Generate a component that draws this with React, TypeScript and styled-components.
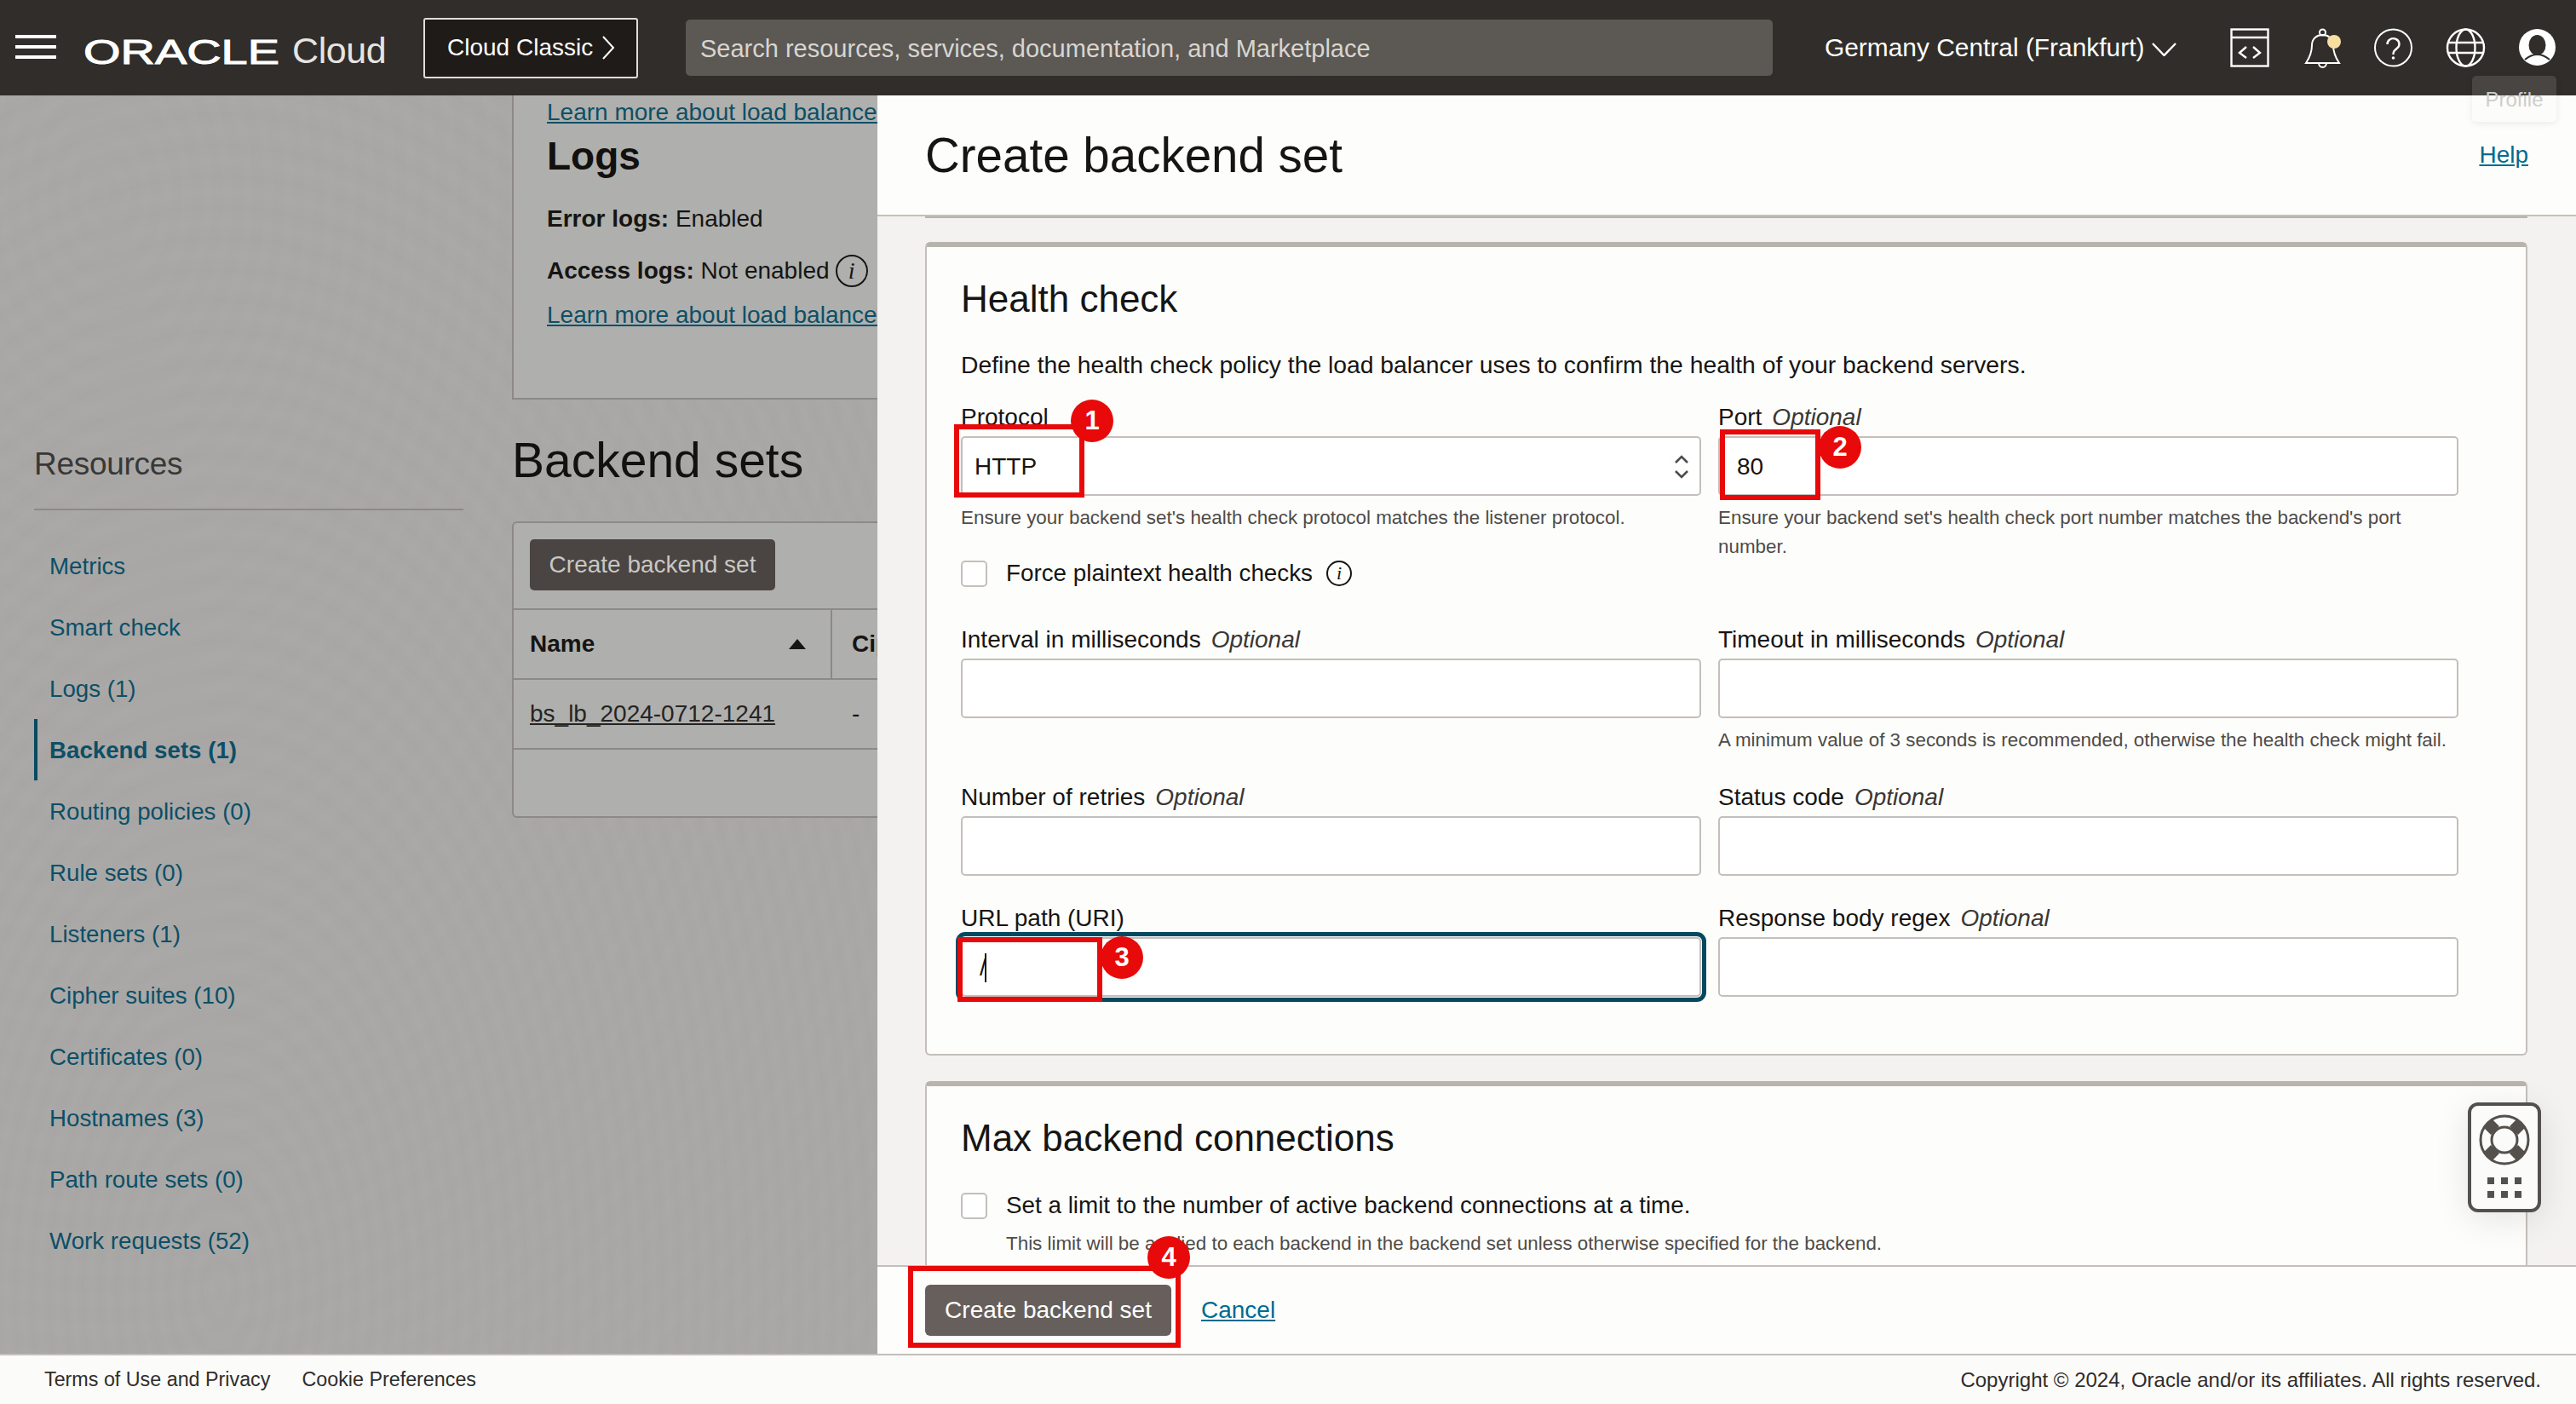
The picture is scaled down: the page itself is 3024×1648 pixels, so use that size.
import React from "react";
import styled, { createGlobalStyle } from "styled-components";

const GlobalStyle = createGlobalStyle`
	html, body {
		margin: 0;
		padding: 0;
		background: #fbfbfa;
	}
	body {
		font-family: "Liberation Sans", Arial, sans-serif;
		color: #161513;
	}
	* {
		box-sizing: border-box;
	}
`;

const Page = styled.div`
	width: 3024px;
	height: 1648px;
	display: flex;
	flex-direction: column;
	overflow: hidden;
	position: relative;
`;

/* ---------- top bar ---------- */

const Header = styled.header`
	height: 112px;
	flex-shrink: 0;
	background: #312d2a;
	display: flex;
	align-items: center;
	padding-left: 18px;
	position: relative;
	z-index: 3;
`;

const Hamburger = styled.div`
	width: 48px;
	height: 28px;
	margin-top: -2px;
	display: flex;
	flex-direction: column;
	justify-content: space-between;
	span {
		display: block;
		height: 4px;
		background: #fff;
	}
`;

const LogoMark = styled.svg`
	width: 232px;
	height: 40px;
	margin-left: 32px;
	margin-top: 10px;
	overflow: visible;
	text {
		font-family: "Liberation Sans", Arial, sans-serif;
		font-weight: 400;
		font-size: 41px;
		fill: #fff;
		stroke: #fff;
		stroke-width: 1;
	}
`;

const CloudWord = styled.span`
	margin-left: 13px;
	width: 111px;
	font-size: 43px;
	line-height: 48px;
	margin-top: 6px;
	color: #e6e4e1;
	letter-spacing: -0.4px;
`;

const ClassicButton = styled.div`
	margin-left: 43px;
	width: 252px;
	height: 71px;
	background: #1e1b18;
	border: 2px solid #e0dcd8;
	border-radius: 3px;
	color: #fff;
	font-size: 28px;
	display: flex;
	align-items: center;
	padding-left: 26px;
	gap: 10px;
	svg {
		width: 16px;
		height: 28px;
	}
`;

const SearchBox = styled.div`
	margin-left: 56px;
	width: 1276px;
	height: 66px;
	background: #5c5955;
	border-radius: 5px;
	color: #d8d5d1;
	font-size: 29px;
	display: flex;
	align-items: center;
	padding-left: 17px;
	padding-top: 2px;
`;

const RegionPicker = styled.div`
	margin-left: 61px;
	display: flex;
	align-items: center;
	gap: 9px;
	color: #fff;
	font-size: 29.9px;
	width: 415px;
	svg {
		width: 29px;
		height: 16px;
		margin-top: 4px;
	}
`;

const HeaderIcons = styled.div`
	margin-left: 61px;
	display: flex;
	gap: 38.5px;
`;

const IconSlot = styled.div`
	width: 46px;
	height: 46px;
	position: relative;
	svg {
		display: block;
		width: 46px;
		height: 46px;
		overflow: visible;
	}
`;

const ProfileTip = styled.div`
	position: absolute;
	top: 56px;
	left: -54px;
	width: 99px;
	height: 54px;
	border-radius: 5px;
	background: rgba(250, 250, 248, 0.12);
	box-shadow: 0 2px 8px rgba(0, 0, 0, 0.08);
	color: #cfcdca;
	font-size: 24px;
	display: flex;
	align-items: flex-end;
	justify-content: center;
	padding-bottom: 12px;
`;

/* ---------- page behind the drawer ---------- */

const Main = styled.main`
	flex: 1;
	min-height: 0;
	display: flex;
`;

const DimmedPage = styled.div`
	width: 1030px;
	flex-shrink: 0;
	display: flex;
	overflow: hidden;
	background-color: #a9a8a7;
	background-image:
		repeating-radial-gradient(ellipse at 25% 95%, rgba(0, 0, 0, 0.012) 0, rgba(0, 0, 0, 0) 10px, rgba(0, 0, 0, 0.012) 20px),
		repeating-radial-gradient(ellipse at 12% 8%, rgba(255, 255, 255, 0.01) 0, rgba(255, 255, 255, 0) 12px, rgba(255, 255, 255, 0.01) 24px);
`;

const Sidebar = styled.aside`
	width: 601px;
	flex-shrink: 0;
	padding: 408px 57px 0 40px;
`;

const ResourcesTitle = styled.h2`
	margin: 0;
	height: 79px;
	padding-bottom: 27px;
	border-bottom: 2px solid #8c8987;
	font-size: 37px;
	line-height: 50px;
	font-weight: 400;
	color: #3a3836;
	letter-spacing: -0.3px;
`;

const NavList = styled.nav`
	margin-top: 29px;
`;

const NavItem = styled.div<{ $active?: boolean }>`
	height: 72px;
	display: flex;
	align-items: center;
	padding: 2px 0 0 14px;
	border-left: 4px solid ${(p) => (p.$active ? "#0a4a60" : "transparent")};
	font-size: 27.7px;
	font-weight: ${(p) => (p.$active ? 700 : 400)};
	color: #0c4f66;
`;

const ContentColumn = styled.div`
	flex: 1;
	min-width: 0;
	overflow: hidden;
	white-space: nowrap;
`;

const DetailsBox = styled.section`
	height: 357px;
	padding: 3px 0 0 39px;
	background: #afafad;
	border-left: 2px solid #8c8987;
	border-bottom: 2px solid #8c8987;
`;

const DimLink = styled.a`
	display: block;
	line-height: 34px;
	font-size: 28px;
	color: #0c4f66;
	text-decoration: underline;
`;

const LogsTitle = styled.h3`
	margin: 9px 0 32px;
	font-size: 46px;
	line-height: 50px;
	font-weight: 700;
	color: #121110;
`;

const DetailLine = styled.p<{ $gap: number }>`
	margin: 0 0 ${(p) => p.$gap}px;
	height: 34px;
	line-height: 34px;
	font-size: 28px;
	display: flex;
	align-items: center;
	gap: 7px;
`;

const InfoIcon = styled.span`
	width: 38px;
	height: 38px;
	border: 2px solid #161513;
	border-radius: 50%;
	display: inline-flex;
	align-items: center;
	justify-content: center;
	font-family: "Liberation Serif", serif;
	font-style: italic;
	font-size: 28px;
	color: #161513;
	flex-shrink: 0;
`;

const SectionTitle = styled.h2`
	margin: 38px 0 39px;
	font-size: 57px;
	line-height: 66px;
	font-weight: 400;
	color: #121110;
`;

const TableCard = styled.section`
	height: 348px;
	background: #afafad;
	border: 2px solid #8c8987;
	border-right: none;
	border-radius: 6px 0 0 6px;
`;

const TableToolbar = styled.div`
	height: 102px;
	padding: 19px 0 0 19px;
	border-bottom: 2px solid #8c8987;
`;

const DimButton = styled.div`
	width: 288px;
	height: 60px;
	background: #4a4542;
	border-radius: 5px;
	color: #c9c7c3;
	font-size: 28px;
	display: flex;
	align-items: center;
	justify-content: center;
`;

const TableRow = styled.div`
	height: 82px;
	display: grid;
	grid-template-columns: 374px 1fr;
	align-items: stretch;
	border-bottom: 2px solid #8c8987;
	font-size: 28px;
`;

const NameCell = styled.div<{ $head?: boolean }>`
	display: flex;
	align-items: center;
	justify-content: space-between;
	padding: 0 29px 0 19px;
	font-weight: ${(p) => (p.$head ? 700 : 400)};
	border-right: ${(p) => (p.$head ? "2px solid #8c8987" : "none")};
`;

const SecondCell = styled.div<{ $head?: boolean }>`
	display: flex;
	align-items: center;
	padding-left: 23px;
	font-weight: ${(p) => (p.$head ? 700 : 400)};
`;

const SortArrow = styled.span`
	width: 0;
	height: 0;
	border-left: 10px solid transparent;
	border-right: 10px solid transparent;
	border-bottom: 12px solid #161513;
`;

const RowLink = styled.a`
	color: #262422;
	text-decoration: underline;
`;

/* ---------- drawer ---------- */

const Drawer = styled.div`
	flex: 1;
	min-width: 0;
	display: flex;
	flex-direction: column;
	position: relative;
	background: #fdfdfc;
`;

const DrawerHead = styled.div`
	height: 142px;
	flex-shrink: 0;
	display: flex;
	align-items: center;
	justify-content: space-between;
	padding: 0 56px;
	border-bottom: 2px solid #c4bfba;
`;

const DrawerTitle = styled.h1`
	margin: 0;
	font-size: 56.5px;
	font-weight: 400;
	color: #161513;
`;

const HelpLink = styled.a`
	font-size: 28px;
	color: #006b8f;
	text-decoration: underline;
`;

const DrawerBody = styled.div`
	flex: 1;
	min-height: 0;
	overflow: hidden;
	background: #f3f2f1;
	padding: 0 57px 0 56px;
`;

const PrevCardEdge = styled.div`
	height: 2px;
	margin-bottom: 28px;
	background: #b9b3ad;
`;

const Card = styled.section<{ $pad?: number }>`
	background: #fdfdfc;
	border: 2px solid #c4bfba;
	border-top: 6px solid #b9b3ad;
	border-radius: 6px;
	padding: 36px 40px ${(p) => p.$pad ?? 67}px;
	margin-bottom: 30px;
`;

const CardTitle = styled.h2`
	margin: 0;
	font-size: 44px;
	line-height: 50px;
	font-weight: 400;
	color: #161513;
`;

const CardIntro = styled.p`
	margin: 35px 0 27px;
	font-size: 28.3px;
	line-height: 34px;
	color: #161513;
`;

const FieldGrid = styled.div`
	display: grid;
	grid-template-columns: 869px 869px;
	column-gap: 20px;
	row-gap: 32px;
`;

const Field = styled.div`
	position: relative;
`;

const FieldLabel = styled.label`
	display: block;
	height: 34px;
	margin-bottom: 6px;
	padding-top: 1px;
	font-size: 28px;
	line-height: 34px;
	color: #161513;
	em {
		margin-left: 12px;
		color: #3a3734;
	}
`;

const InputBox = styled.div`
	height: 70px;
	display: flex;
	align-items: center;
	padding: 2px 12px 0 20px;
	background: #fff;
	border: 2px solid #c4bfba;
	border-radius: 5px;
	font-size: 28px;
	color: #161513;
`;

const SelectBox = styled(InputBox)`
	justify-content: space-between;
	padding-left: 14px;
	svg {
		width: 18px;
		height: 30px;
	}
`;

const FocusedBox = styled(InputBox)`
	outline: 5px solid #04495f;
	outline-offset: 1px;
`;

const Caret = styled.span`
	display: inline-block;
	width: 2px;
	height: 34px;
	margin-left: -2px;
	background: #161513;
`;

const Hint = styled.p`
	margin: 9px 0 0;
	font-size: 22.4px;
	line-height: 34px;
	color: #4f4b47;
`;

const CheckRow = styled.div<{ $top: number; $bottom?: number }>`
	display: flex;
	align-items: center;
	height: 34px;
	margin: ${(p) => p.$top}px 0 ${(p) => p.$bottom ?? 0}px;
	font-size: 27.8px;
	color: #161513;
`;

const CheckBox = styled.span`
	width: 31px;
	height: 31px;
	margin-right: 22px;
	background: #fff;
	border: 2px solid #c4bfba;
	border-radius: 5px;
	flex-shrink: 0;
`;

const SmallInfo = styled(InfoIcon)`
	width: 30px;
	height: 30px;
	margin-left: 16px;
	font-size: 22px;
`;

const CheckNote = styled.p`
	margin: 11px 0 0 53px;
	font-size: 22.4px;
	line-height: 34px;
	color: #4f4b47;
	white-space: nowrap;
`;

const ActionBar = styled.div`
	height: 104px;
	flex-shrink: 0;
	display: flex;
	align-items: center;
	gap: 35px;
	padding-left: 56px;
	background: #fdfdfc;
	border-top: 2px solid #c4bfba;
	position: relative;
	z-index: 2;
`;

const PrimaryButton = styled.div`
	width: 289px;
	height: 60px;
	background: #665f5b;
	border-radius: 6px;
	color: #fff;
	font-size: 28px;
	display: flex;
	align-items: center;
	justify-content: center;
`;

const CancelLink = styled.a`
	font-size: 28px;
	color: #006b8f;
	text-decoration: underline;
`;

/* ---------- red callouts on the screenshot ---------- */

const CalloutBox = styled.div<{ $left: number; $top: number; $w: number; $h: number }>`
	position: absolute;
	left: ${(p) => p.$left}px;
	top: ${(p) => p.$top}px;
	width: ${(p) => p.$w}px;
	height: ${(p) => p.$h}px;
	border: 6px solid #e80a0a;
	pointer-events: none;
`;

const CalloutBadge = styled.span<{ $left: number; $top: number }>`
	position: absolute;
	left: ${(p) => p.$left}px;
	top: ${(p) => p.$top}px;
	width: 50px;
	height: 50px;
	border-radius: 50%;
	background: #e80a0a;
	color: #fff;
	font-size: 31px;
	font-weight: 700;
	display: flex;
	align-items: center;
	justify-content: center;
`;

/* ---------- floating help widget ---------- */

const HelpWidget = styled.div`
	position: absolute;
	right: 41px;
	top: 1182px;
	width: 86px;
	height: 129px;
	background: #fbfbfa;
	border: 4px solid #54514c;
	border-radius: 12px;
	box-shadow: 0 8px 40px rgba(0, 0, 0, 0.1);
	z-index: 1;
	display: flex;
	flex-direction: column;
	align-items: center;
	padding-top: 10px;
	svg {
		width: 60px;
		height: 60px;
	}
`;

const DotGrid = styled.div`
	margin-top: 14px;
	display: grid;
	grid-template-columns: repeat(3, 8px);
	grid-auto-rows: 8px;
	gap: 8px;
	span {
		background: #54514c;
	}
`;

/* ---------- footer ---------- */

const Footer = styled.footer`
	height: 59px;
	flex-shrink: 0;
	display: flex;
	align-items: center;
	justify-content: space-between;
	padding: 0 41px 0 52px;
	background: #fbfbfa;
	border-top: 2px solid #c4bfba;
	font-size: 23.3px;
	color: #312d2a;
`;

const FooterLinks = styled.div`
	display: flex;
	gap: 37px;
`;

const Copyright = styled.span`
	font-size: 24px;
`;

const navItems = [
	"Metrics",
	"Smart check",
	"Logs (1)",
	"Backend sets (1)",
	"Routing policies (0)",
	"Rule sets (0)",
	"Listeners (1)",
	"Cipher suites (10)",
	"Certificates (0)",
	"Hostnames (3)",
	"Path route sets (0)",
	"Work requests (52)",
];

const Stepper = () => (
	<svg viewBox="0 0 18 30" fill="none" stroke="#4f4b47" strokeWidth="2.6">
		<polyline points="2,10 9,3 16,10" />
		<polyline points="2,20 9,27 16,20" />
	</svg>
);

const LifeRing = () => (
	<svg viewBox="0 0 60 60" fill="none" stroke="#54514c">
		<circle cx="30" cy="30" r="28" strokeWidth="3" />
		<circle cx="30" cy="30" r="15" strokeWidth="3" />
		<path d="M19 19 L10 10 M41 19 L50 10 M19 41 L10 50 M41 41 L50 50" strokeWidth="14" />
	</svg>
);

export default function App() {
	return (
		<Page>
			<GlobalStyle />
			<Header>
				<Hamburger>
					<span />
					<span />
					<span />
				</Hamburger>
				<LogoMark viewBox="0 0 232 40">
					<text x="0" y="34" textLength="230" lengthAdjust="spacingAndGlyphs">
						ORACLE
					</text>
				</LogoMark>
				<CloudWord>Cloud</CloudWord>
				<ClassicButton>
					Cloud Classic
					<svg viewBox="0 0 16 28" fill="none" stroke="#fff" strokeWidth="2">
						<polyline points="2,1 14,14 2,27" />
					</svg>
				</ClassicButton>
				<SearchBox>Search resources, services, documentation, and Marketplace</SearchBox>
				<RegionPicker>
					Germany Central (Frankfurt)
					<svg viewBox="0 0 29 16" fill="none" stroke="#fff" strokeWidth="2.4">
						<polyline points="1,1 14.5,15 28,1" />
					</svg>
				</RegionPicker>
				<HeaderIcons>
					<IconSlot>
						<svg viewBox="0 0 46 46" fill="none" stroke="#fff" strokeWidth="2.4">
							<rect x="1.5" y="1.5" width="43" height="43" />
							<line x1="1.5" y1="11" x2="44.5" y2="11" />
							<polyline points="19,22 11,29 19,35" />
							<polyline points="27,22 35,29 27,35" />
						</svg>
					</IconSlot>
					<IconSlot>
						<svg viewBox="0 0 46 46" fill="none" stroke="#fff" strokeWidth="2">
							<circle cx="23.5" cy="5" r="3.5" />
							<path d="M4 41 L43 41 C37 32 36 26 36 20 C36 12 30 8 23.5 8 C17 8 11 12 11 20 C11 26 10 32 4 41 Z" />
							<path d="M19 41 a4.5 5 0 0 0 9 0" />
							<circle cx="37" cy="16" r="8" fill="#f8dea0" stroke="none" />
						</svg>
					</IconSlot>
					<IconSlot>
						<svg viewBox="0 0 46 46" fill="none" stroke="#fff" strokeWidth="2">
							<circle cx="22.5" cy="23" r="21.5" />
							<path d="M15.5 19 a7 6.5 0 1 1 11 5 c-3 2.5 -4 3.5 -4 7" strokeWidth="2.4" />
							<circle cx="22.5" cy="35" r="1.8" fill="#fff" stroke="none" />
						</svg>
					</IconSlot>
					<IconSlot>
						<svg viewBox="0 0 46 46" fill="none" stroke="#fff" strokeWidth="2.4">
							<circle cx="22.5" cy="23" r="21.5" />
							<ellipse cx="22.5" cy="23" rx="11" ry="21.5" />
							<path d="M3 17 H42 M3 29 H42" />
						</svg>
					</IconSlot>
					<IconSlot>
						<svg viewBox="0 0 46 46" fill="none">
							<circle cx="22.5" cy="22.5" r="21.5" fill="#fff" />
							<ellipse cx="22.5" cy="20" rx="10" ry="12" fill="#312d2a" />
							<path d="M8 37 C14 32 18 31 22.5 31 C27 31 31 32 37 37" stroke="#312d2a" strokeWidth="2.2" />
						</svg>
						<ProfileTip>Profile</ProfileTip>
					</IconSlot>
				</HeaderIcons>
			</Header>

			<Main>
				<DimmedPage>
					<Sidebar>
						<ResourcesTitle>Resources</ResourcesTitle>
						<NavList>
							{navItems.map((item) => (
								<NavItem key={item} $active={item === "Backend sets (1)"}>
									{item}
								</NavItem>
							))}
						</NavList>
					</Sidebar>
					<ContentColumn>
						<DetailsBox>
							<DimLink>Learn more about load balancers</DimLink>
							<LogsTitle>Logs</LogsTitle>
							<DetailLine $gap={27}>
								<span>
									<b>Error logs:</b> Enabled
								</span>
							</DetailLine>
							<DetailLine $gap={18}>
								<span>
									<b>Access logs:</b> Not enabled
								</span>
								<InfoIcon>i</InfoIcon>
							</DetailLine>
							<DimLink>Learn more about load balancers</DimLink>
						</DetailsBox>
						<SectionTitle>Backend sets</SectionTitle>
						<TableCard>
							<TableToolbar>
								<DimButton>Create backend set</DimButton>
							</TableToolbar>
							<TableRow>
								<NameCell $head>
									Name
									<SortArrow />
								</NameCell>
								<SecondCell $head>Cipher suite</SecondCell>
							</TableRow>
							<TableRow>
								<NameCell>
									<RowLink>bs_lb_2024-0712-1241</RowLink>
								</NameCell>
								<SecondCell>-</SecondCell>
							</TableRow>
						</TableCard>
					</ContentColumn>
				</DimmedPage>

				<Drawer>
					<DrawerHead>
						<DrawerTitle>Create backend set</DrawerTitle>
						<HelpLink>Help</HelpLink>
					</DrawerHead>
					<DrawerBody>
						<PrevCardEdge />
						<Card>
							<CardTitle>Health check</CardTitle>
							<CardIntro>
								Define the health check policy the load balancer uses to confirm the health of your backend servers.
							</CardIntro>
							<FieldGrid>
								<Field>
									<FieldLabel>Protocol</FieldLabel>
									<SelectBox>
										HTTP
										<Stepper />
									</SelectBox>
									<Hint>Ensure your backend set's health check protocol matches the listener protocol.</Hint>
									<CheckRow $top={31} $bottom={11}>
										<CheckBox />
										Force plaintext health checks
										<SmallInfo>i</SmallInfo>
									</CheckRow>
									<CalloutBox $left={-8} $top={26} $w={153} $h={86} />
									<CalloutBadge $left={129} $top={-3}>
										1
									</CalloutBadge>
								</Field>
								<Field>
									<FieldLabel>
										Port<em>Optional</em>
									</FieldLabel>
									<InputBox>80</InputBox>
									<Hint>
										Ensure your backend set's health check port number matches the backend's port number.
									</Hint>
									<CalloutBox $left={2} $top={32} $w={118} $h={83} />
									<CalloutBadge $left={118} $top={28}>
										2
									</CalloutBadge>
								</Field>
								<Field>
									<FieldLabel>
										Interval in milliseconds<em>Optional</em>
									</FieldLabel>
									<InputBox />
								</Field>
								<Field>
									<FieldLabel>
										Timeout in milliseconds<em>Optional</em>
									</FieldLabel>
									<InputBox />
									<Hint>A minimum value of 3 seconds is recommended, otherwise the health check might fail.</Hint>
								</Field>
								<Field>
									<FieldLabel>
										Number of retries<em>Optional</em>
									</FieldLabel>
									<InputBox />
								</Field>
								<Field>
									<FieldLabel>
										Status code<em>Optional</em>
									</FieldLabel>
									<InputBox />
								</Field>
								<Field>
									<FieldLabel>URL path (URI)</FieldLabel>
									<FocusedBox>
										/<Caret />
									</FocusedBox>
									<CalloutBox $left={-4} $top={40} $w={170} $h={76} />
									<CalloutBadge $left={164} $top={39}>
										3
									</CalloutBadge>
								</Field>
								<Field>
									<FieldLabel>
										Response body regex<em>Optional</em>
									</FieldLabel>
									<InputBox />
								</Field>
							</FieldGrid>
						</Card>
						<Card $pad={40}>
							<CardTitle>Max backend connections</CardTitle>
							<CheckRow $top={37}>
								<CheckBox />
								Set a limit to the number of active backend connections at a time.
							</CheckRow>
							<CheckNote>
								This limit will be applied to each backend in the backend set unless otherwise specified for the
								backend.
							</CheckNote>
						</Card>
					</DrawerBody>
					<HelpWidget>
						<LifeRing />
						<DotGrid>
							<span />
							<span />
							<span />
							<span />
							<span />
							<span />
						</DotGrid>
					</HelpWidget>
					<ActionBar>
						<PrimaryButton>Create backend set</PrimaryButton>
						<CancelLink>Cancel</CancelLink>
						<CalloutBox $left={36} $top={-1} $w={320} $h={96} />
						<CalloutBadge $left={317} $top={-36}>
							4
						</CalloutBadge>
					</ActionBar>
				</Drawer>
			</Main>

			<Footer>
				<FooterLinks>
					<span>Terms of Use and Privacy</span>
					<span>Cookie Preferences</span>
				</FooterLinks>
				<Copyright>Copyright © 2024, Oracle and/or its affiliates. All rights reserved.</Copyright>
			</Footer>
		</Page>
	);
}
